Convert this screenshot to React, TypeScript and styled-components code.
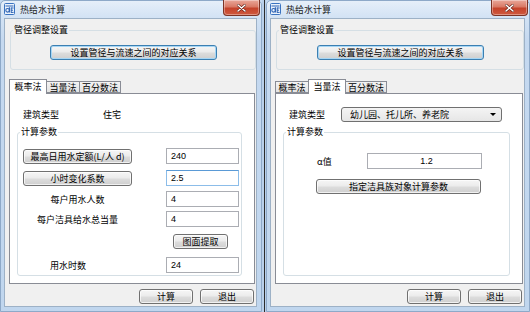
import React from 'react';
import styled, { createGlobalStyle } from 'styled-components';

const Global = createGlobalStyle`
  html, body { margin: 0; padding: 0; }
  body {
    width: 530px; height: 312px; overflow: hidden;
    background: #c3d8ef;
    font-family: "Noto Sans CJK SC", "Liberation Sans", sans-serif;
    font-size: 9px; color: #000;
  }
  * { box-sizing: border-box; }
`;

const Desktop = styled.div`
  display: flex;
  width: 530px;
  height: 312px;
`;

const Splitter = styled.div`
  width: 4px;
  background: #b9d0ea;
  display: flex;
  justify-content: center;
  &::after { content: ''; width: 1px; background: #2b2b2b; }
`;

const Win = styled.div<{ $w: number }>`
  width: ${p => p.$w}px;
  height: 312px;
  border: 1px solid #8ea9c8;
  border-radius: 5px 5px 0 0;
  background: linear-gradient(to bottom, #e6eff9 0px, #d2e2f4 17px, #c5d9f0 40px, #c0d6ee 100%);
  display: flex;
  flex-direction: column;
`;

const TitleBar = styled.div`
  height: 17px;
  display: flex;
  align-items: flex-start;
`;

const TitleIcon = styled.svg`
  width: 11px; height: 12px;
  margin: 2px 0 0 3px;
  flex: none;
`;

const TitleText = styled.div`
  margin-left: 5px;
  line-height: 17px;
  color: #1a1a1a;
`;

const CloseBtn = styled.div`
  margin-left: auto;
  margin-right: 1px;
  margin-top: -1px;
  width: 37px; height: 16px;
  border: 1px solid #7c3325;
  border-top: none;
  border-radius: 0 0 4px 4px;
  background: linear-gradient(to bottom, #e9a799 0%, #d97a66 45%, #c5432b 55%, #cf5a3f 100%);
  display: flex; align-items: center; justify-content: center;
  box-shadow: inset 0 0 0 1px rgba(255,255,255,0.35);
`;

const Client = styled.div`
  flex: 1;
  margin: 0 4px 4px 3px;
  border: 1px solid #9db1c6;
  background: #f0f0f0;
  display: flex;
  flex-direction: column;
  padding: 4px 0 0 4px;
`;

const Group = styled.fieldset<{ $m?: string }>`
  margin: ${p => p.$m || '0'};
  padding: 0 0 0 5px;
  border: 1px solid #d5dfe5;
  border-radius: 3px;
  min-width: 0;
  display: flex;
  flex-direction: column;
`;

const Legend = styled.legend`
  padding: 0 1px;
  margin-left: -3px;
  line-height: 14px;
  color: #000;
`;

const Btn = styled.button<{ $w: number; $def?: boolean; $mt?: number; $ml?: number }>`
  width: ${p => p.$w}px;
  height: 15px;
  margin-top: ${p => p.$mt || 0}px;
  margin-left: ${p => (p.$ml === undefined ? 0 : p.$ml)}px;
  padding: 0;
  font: inherit;
  line-height: 13px;
  color: #000;
  border: 1px solid ${p => (p.$def ? '#3c7fb1' : '#707070')};
  border-radius: 3px;
  background: linear-gradient(to bottom, #f6f6f6 0%, #ebebeb 48%, #dddddd 52%, #cfcfcf 100%);
  box-shadow: inset 0 0 0 1px ${p => (p.$def ? '#a6d6f5' : 'rgba(255,255,255,0.7)')};
  white-space: nowrap;
  flex: none;
`;

const CenterBtnRow = styled.div`
  display: flex;
  justify-content: center;
  padding: 8px 4px 9px 0;
`;

const TabStrip = styled.div`
  display: flex;
  align-items: flex-end;
  height: 14px;
  margin-top: 9px;
  position: relative;
  z-index: 1;
`;

const Tab = styled.div<{ $w: number; $on?: boolean }>`
  width: ${p => p.$w + (p.$on ? 4 : 0)}px;
  height: ${p => (p.$on ? 15 : 12)}px;
  margin-bottom: ${p => (p.$on ? -1 : 0)}px;
  border: 1px solid #898c95;
  border-bottom: ${p => (p.$on ? 'none' : '1px solid #898c95')};
  border-left-width: ${p => (p.$on ? 1 : 1)}px;
  margin-right: -1px;
  background: ${p => (p.$on ? '#ffffff' : 'linear-gradient(to bottom, #f3f3f3, #e3e3e3)')};
  text-align: center;
  line-height: ${p => (p.$on ? 14 : 11)}px;
  flex: none;
`;

const Panel = styled.div`
  flex: 1;
  border: 1px solid #898c95;
  background: #ffffff;
  margin-right: 1px;
  display: flex;
  flex-direction: column;
  padding: 13px 0 7px 0;
`;

const TypeRow = styled.div`
  display: flex;
  align-items: center;
  height: 15px;
  padding-left: 13px;
`;

const TypeLabel = styled.div<{ $w: number }>`
  width: ${p => p.$w}px;
  flex: none;
`;

const Combo = styled.div`
  width: 161px;
  height: 15px;
  border: 1px solid #707070;
  border-radius: 3px;
  background: linear-gradient(to bottom, #f4f4f4, #e6e6e6);
  display: flex;
  align-items: center;
  padding: 0 5px 0 8px;
`;

const ComboText = styled.div`
  flex: 1;
`;

const ComboArrow = styled.div`
  width: 0; height: 0;
  border-left: 3px solid transparent;
  border-right: 3px solid transparent;
  border-top: 3px solid #000;
`;

const ParamRow = styled.div<{ $mt: number }>`
  display: flex;
  align-items: center;
  height: 16px;
  margin-top: ${p => p.$mt}px;
`;

const LeftCell = styled.div<{ $w: number; $align?: string; $pl?: number }>`
  width: ${p => p.$w}px;
  flex: none;
  display: flex;
  justify-content: ${p => p.$align || 'center'};
  padding-left: ${p => p.$pl || 0}px;
`;

const Input = styled.div<{ $w: number; $ml: number; $focus?: boolean; $center?: boolean }>`
  width: ${p => p.$w}px;
  height: 16px;
  margin-left: ${p => p.$ml}px;
  border: 1px solid ${p => (p.$focus ? '#8cbde9' : '#abadb3')};
  border-top-color: ${p => (p.$focus ? '#5a9ad6' : '#abadb3')};
  background: #fff;
  line-height: 14px;
  padding-left: 4px;
  text-align: ${p => (p.$center ? 'center' : 'left')};
  font-family: "Liberation Sans", "Noto Sans CJK SC", sans-serif;
  flex: none;
`;

const Footer = styled.div`
  display: flex;
  justify-content: flex-end;
  gap: 7px;
  padding: 5px 2px 2px 0;
`;

const Icon = () => (
  <TitleIcon viewBox="0 0 11 12">
    <rect x="0.5" y="0.5" width="10" height="11" rx="1" fill="#eaf2fc" stroke="#3a73c0" />
    <path d="M1.5 3 H9.5" stroke="#2f64b4" strokeWidth="1" />
    <circle cx="3.6" cy="7.3" r="1.8" fill="none" stroke="#2f64b4" strokeWidth="1.1" />
    <path d="M5.4 4.2 V9.4" stroke="#2f64b4" strokeWidth="1.1" />
    <path d="M7 5 H9.6 M7 7.2 H9 M7 9.4 H9.6 M7.2 4.6 V9.8" stroke="#2f64b4" strokeWidth="1" />
  </TitleIcon>
);

const CloseX = () => (
  <svg width="9" height="8" viewBox="0 0 9 8">
    <path d="M1 1 L8 7 M8 1 L1 7" stroke="#5a1a10" strokeWidth="2.6" strokeLinecap="round" />
    <path d="M1 1 L8 7 M8 1 L1 7" stroke="#ffffff" strokeWidth="1.5" strokeLinecap="round" />
  </svg>
);

const Tabs = ({ active }: { active: number }) => {
  const items: [string, number][] = [['概率法', 34], ['当量法', 34], ['百分数法', 42]];
  return (
    <TabStrip>
      {items.map(([t, w], i) => (
        <Tab key={t} $w={w} $on={i === active}>{t}</Tab>
      ))}
    </TabStrip>
  );
};

const Window = ({ width, active, children }: { width: number; active: number; children: React.ReactNode }) => (
  <Win $w={width}>
    <TitleBar>
      <Icon />
      <TitleText>热给水计算</TitleText>
      <CloseBtn><CloseX /></CloseBtn>
    </TitleBar>
    <Client>
      <Group $m="0 0 0 1px">
        <Legend>管径调整设置</Legend>
        <CenterBtnRow>
          <Btn $w={167} $def>设置管径与流速之间的对应关系</Btn>
        </CenterBtnRow>
      </Group>
      <Tabs active={active} />
      <Panel>{children}</Panel>
      <Footer>
        <Btn $w={54}>计算</Btn>
        <Btn $w={54}>退出</Btn>
      </Footer>
    </Client>
  </Win>
);

export default function App() {
  return (
    <>
      <Global />
      <Desktop>
        <Window width={262} active={0}>
          <TypeRow>
            <TypeLabel $w={80}>建筑类型</TypeLabel>
            <div>住宅</div>
          </TypeRow>
          <Group $m="3px 12px 0 7px" style={{ flex: 1 }}>
            <Legend>计算参数</Legend>
            <ParamRow $mt={9}>
              <LeftCell $w={109}><Btn $w={109}>最高日用水定额(L/人 d)</Btn></LeftCell>
              <Input $w={73} $ml={34}>240</Input>
            </ParamRow>
            <ParamRow $mt={6}>
              <LeftCell $w={109}><Btn $w={109}>小时变化系数</Btn></LeftCell>
              <Input $w={73} $ml={34} $focus>2.5</Input>
            </ParamRow>
            <ParamRow $mt={5}>
              <LeftCell $w={109}>每户用水人数</LeftCell>
              <Input $w={73} $ml={34}>4</Input>
            </ParamRow>
            <ParamRow $mt={4}>
              <LeftCell $w={109}>每户洁具给水总当量</LeftCell>
              <Input $w={73} $ml={34}>4</Input>
            </ParamRow>
            <ParamRow $mt={6}>
              <Btn $w={55} $ml={150}>图面提取</Btn>
            </ParamRow>
            <ParamRow $mt={8}>
              <LeftCell $w={109} $align="flex-start" $pl={27}>用水时数</LeftCell>
              <Input $w={73} $ml={34}>24</Input>
            </ParamRow>
          </Group>
        </Window>
        <Splitter />
        <Window width={264} active={1}>
          <TypeRow>
            <TypeLabel $w={52}>建筑类型</TypeLabel>
            <Combo>
              <ComboText>幼儿园、托儿所、养老院</ComboText>
              <ComboArrow />
            </Combo>
          </TypeRow>
          <Group $m="3px 12px 0 7px" style={{ flex: 1 }}>
            <Legend>计算参数</Legend>
            <ParamRow $mt={14}>
              <LeftCell $w={78} $align="flex-start" $pl={28}>α值</LeftCell>
              <Input $w={115} $ml={0} $center>1.2</Input>
            </ParamRow>
            <ParamRow $mt={9}>
              <Btn $w={165} $ml={27}>指定洁具族对象计算参数</Btn>
            </ParamRow>
          </Group>
        </Window>
      </Desktop>
    </>
  );
}
